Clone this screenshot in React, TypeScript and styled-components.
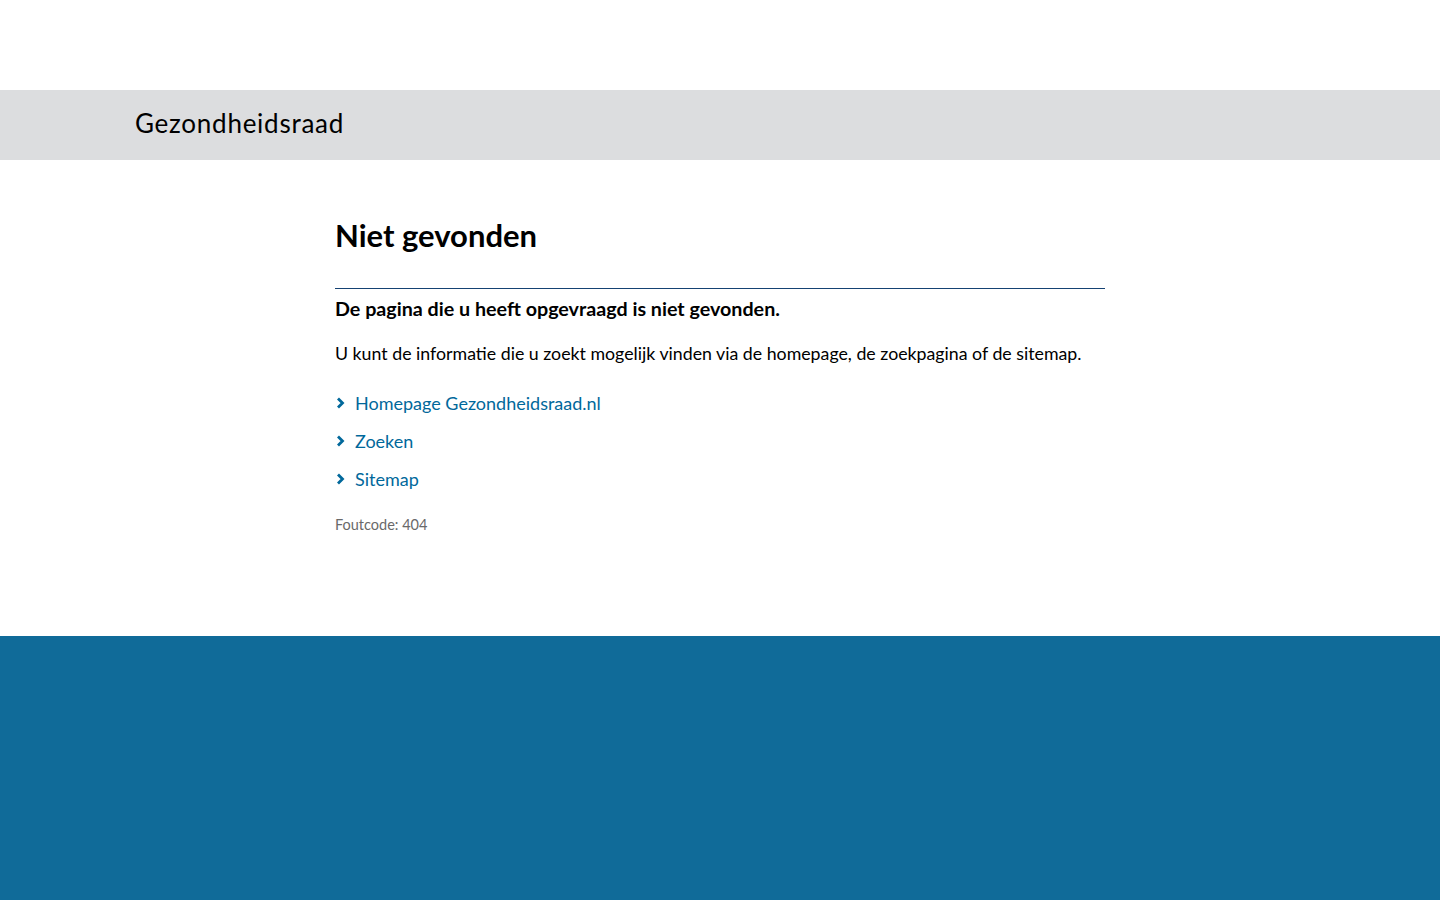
import React from "react"
import styled, { createGlobalStyle } from "styled-components"

const GlobalStyle = createGlobalStyle`
  html, body {
    margin: 0;
    padding: 0;
    background: #ffffff;
    font-family: Lato, "Noto Sans", sans-serif;
    color: #000000;
  }
`

const Page = styled.div`
  display: flex;
  flex-direction: column;
  min-height: 900px;
`

const TopBar = styled.div`
  height: 90px;
  background: #ffffff;
`

const Banner = styled.div`
  height: 70px;
  background: #dcdddf;
`

const BannerInner = styled.div`
  width: 1170px;
  margin: 0 auto;
  padding-top: 17px;
  box-sizing: border-box;
`

const SiteName = styled.div`
  font-size: 26px;
  letter-spacing: 0.75px;
  line-height: 32px;
  color: #000;
`

const Main = styled.main`
  width: 770px;
  margin: 0 auto;
  padding: 56px 0 103px;
`

const Title = styled.h1`
  margin: 0;
  font-size: 31px;
  font-weight: 700;
  line-height: 38px;
  padding-bottom: 34px;
  border-bottom: 1px solid #154273;
`

const Lead = styled.p`
  margin: 8px 0 0;
  font-size: 19.7px;
  font-weight: 700;
  line-height: 24px;
`

const Text = styled.p`
  margin: 19px 0 0;
  font-size: 17.75px;
  line-height: 26px;
`

const LinkList = styled.ul`
  list-style: none;
  margin: 24px 0 0;
  padding: 0;
  display: flex;
  flex-direction: column;
  gap: 12px;
`

const LinkItem = styled.li`
  display: flex;
  align-items: center;
  gap: 9px;
  height: 26px;
`

const Link = styled.a`
  color: #01689b;
  font-size: 18px;
  text-decoration: none;
`

const Code = styled.p`
  margin: 24px 0 0;
  font-size: 14.5px;
  color: #696969;
`

const Footer = styled.footer`
  flex: 1;
  background: #106b99;
`

const Chevron = () => (
  <svg width="11" height="12" viewBox="0 0 11 12">
    <path d="M3 1.5 L7.5 6 L3 10.5" fill="none" stroke="#01689b" strokeWidth="2.8" />
  </svg>
)

const links = ["Homepage Gezondheidsraad.nl", "Zoeken", "Sitemap"]

export default function App() {
  return (
    <Page>
      <GlobalStyle />
      <TopBar />
      <Banner>
        <BannerInner>
          <SiteName>Gezondheidsraad</SiteName>
        </BannerInner>
      </Banner>
      <Main>
        <Title>Niet gevonden</Title>
        <Lead>De pagina die u heeft opgevraagd is niet gevonden.</Lead>
        <Text>U kunt de informatie die u zoekt mogelijk vinden via de homepage, de zoekpagina of de sitemap.</Text>
        <LinkList>
          {links.map((l) => (
            <LinkItem key={l}>
              <Chevron />
              <Link href="#">{l}</Link>
            </LinkItem>
          ))}
        </LinkList>
        <Code>Foutcode: 404</Code>
      </Main>
      <Footer />
    </Page>
  )
}
